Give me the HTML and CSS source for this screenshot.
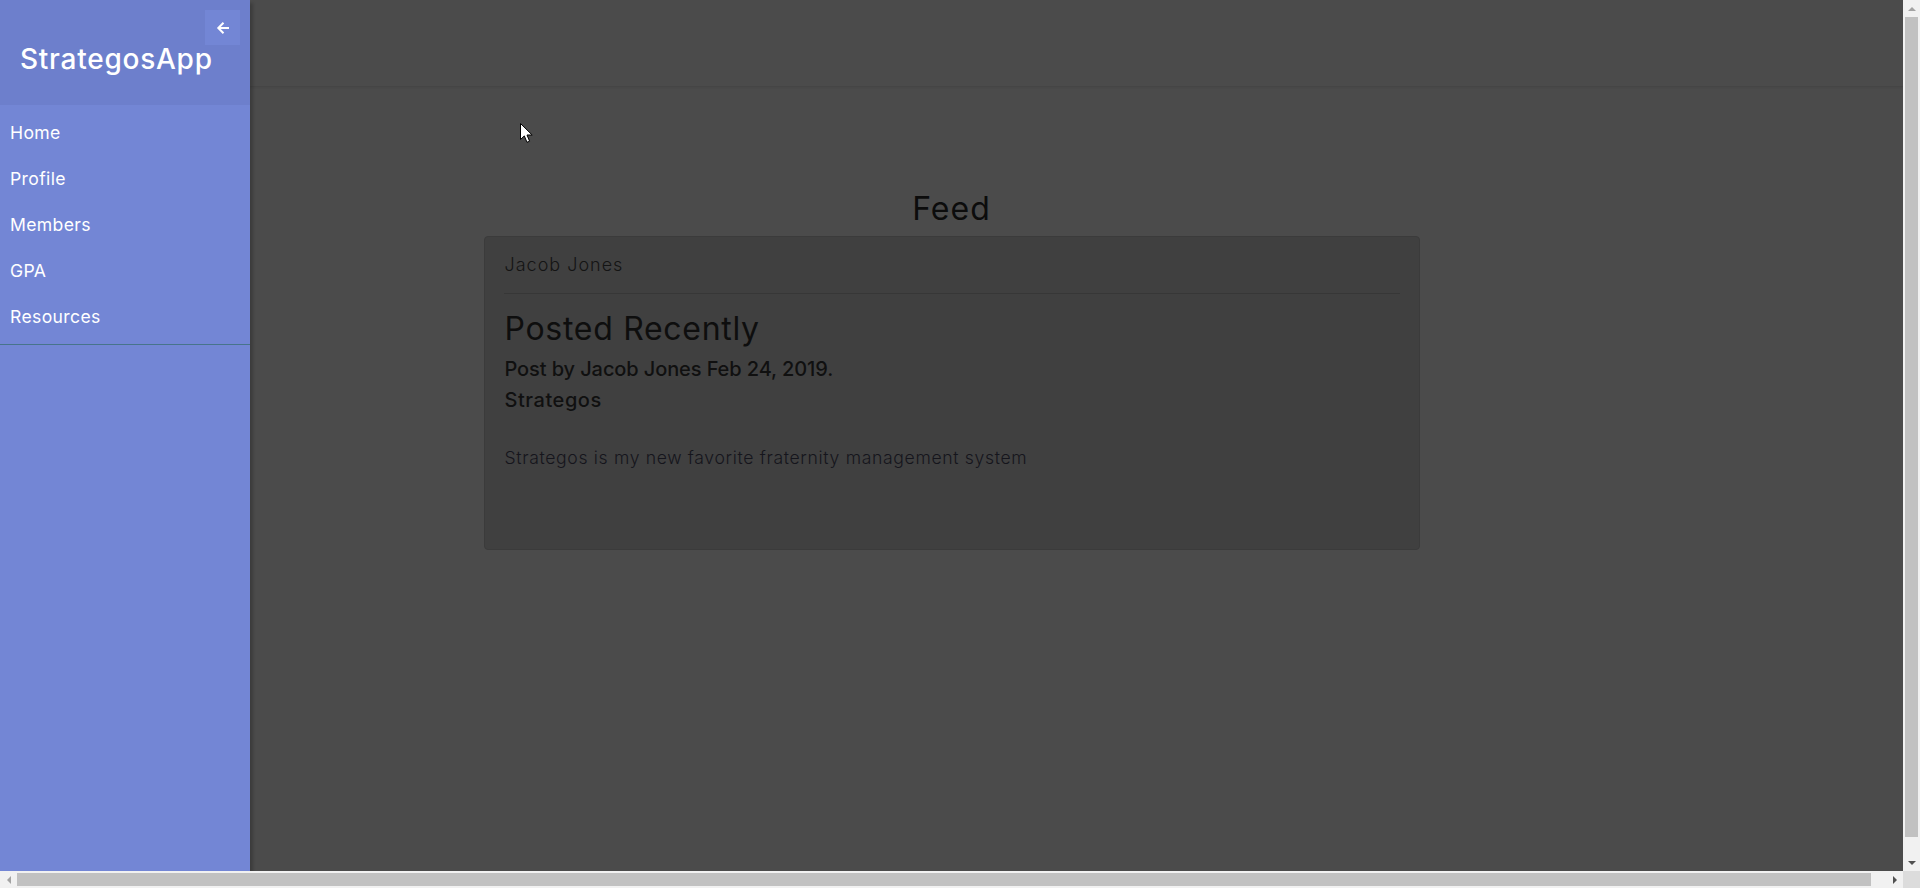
FILE: index.html
```html
<!DOCTYPE html>
<html lang="en">
<head>
<meta charset="utf-8">
<title>StrategosApp</title>
<link rel="stylesheet" href="styles.css">
</head>
<body>
<div class="viewport">
  <div class="content">
    <header class="topbar"></header>
    <main class="container">
      <h2 class="page-title">Feed</h2>
      <section class="card">
        <div class="card-header">Jacob Jones</div>
        <hr class="card-rule">
        <div class="card-body">
          <h2 class="post-title">Posted Recently</h2>
          <h5 class="post-meta">Post by Jacob Jones Feb 24, 2019.</h5>
          <h5 class="post-org">Strategos</h5>
          <p class="post-text">Strategos is my new favorite fraternity management system</p>
        </div>
      </section>
    </main>
  </div>

  <nav class="sidebar">
    <button class="dismiss" type="button" aria-label="Close">
      <svg width="14" height="14" viewBox="0 0 14 14" aria-hidden="true">
        <path d="M13 7H2.5" stroke="#fff" stroke-width="2" fill="none"/>
        <path d="M7.5 1.8L2.3 7l5.2 5.2" stroke="#fff" stroke-width="2" fill="none" stroke-linejoin="miter"/>
      </svg>
    </button>
    <div class="sidebar-header">
      <h3 class="brand">StrategosApp</h3>
    </div>
    <ul class="menu">
      <li><a href="#">Home</a></li>
      <li><a href="#">Profile</a></li>
      <li><a href="#">Members</a></li>
      <li><a href="#">GPA</a></li>
      <li><a href="#">Resources</a></li>
    </ul>
  </nav>

  <svg class="cursor" width="13" height="21" viewBox="0 0 13 21" aria-hidden="true">
    <path d="M0.5 0.5V16.5L4.3 12.9L7 19.3L9.6 18.2L7 12H12.2Z" fill="#fff" stroke="#000" stroke-width="1"/>
  </svg>
</div>

<div class="vscroll" aria-hidden="true">
  <div class="sb-btn">
    <svg width="8" height="4" viewBox="0 0 8 4"><path d="M4 0L8 4H0Z" fill="#a3a3a3"/></svg>
  </div>
  <div class="sb-track sb-track-v"><div class="sb-thumb sb-thumb-v"></div></div>
  <div class="sb-btn">
    <svg width="8" height="4" viewBox="0 0 8 4"><path d="M0 0H8L4 4Z" fill="#505050"/></svg>
  </div>
</div>
<div class="hscroll" aria-hidden="true">
  <div class="sb-btn">
    <svg width="4" height="8" viewBox="0 0 4 8"><path d="M4 0V8L0 4Z" fill="#a3a3a3"/></svg>
  </div>
  <div class="sb-track sb-track-h"><div class="sb-thumb sb-thumb-h"></div></div>
  <div class="sb-btn">
    <svg width="4" height="8" viewBox="0 0 4 8"><path d="M0 0L4 4L0 8Z" fill="#505050"/></svg>
  </div>
</div>
<div class="corner" aria-hidden="true"></div>
</body>
</html>
```
FILE: styles.css
```css
html,
body {
  height: 100%;
}

body {
  margin: 0;
  height: 100vh;
  overflow: hidden;
  display: grid;
  grid-template-columns: 1fr 17px;
  grid-template-rows: 1fr 17px;
  font-family: "Inter", "Noto Sans", sans-serif;
  background: #4b4b4b;
  color: #0d0d0d;
}

/* ---------- page viewport ---------- */
.viewport {
  position: relative;
  overflow: hidden;
  min-width: 0;
  min-height: 0;
}

.content {
  min-height: 100%;
  background: #4b4b4b;
}

.topbar {
  height: 86px;
  border-bottom: 1px solid #454545;
  box-shadow: 0 1px 2px rgba(0, 0, 0, 0.05);
  background: #4b4b4b;
}

.container {
  padding-top: 103px;
}

.page-title {
  margin: 0 0 8px;
  font-size: 32px;
  line-height: 38px;
  font-weight: 400;
  letter-spacing: 1px;
  text-align: center;
  color: #0c0c0c;
}

.card {
  width: 936px;
  margin: 0 auto;
  box-sizing: border-box;
  background: #404040;
  border: 1px solid #3b3b3b;
  border-radius: 4px;
  padding-bottom: 76px;
}

.card-header {
  padding: 15px 20px 0;
  font-size: 18px;
  line-height: 26px;
  font-weight: 300;
  letter-spacing: 1px;
  color: #141414;
  height: 41px;
}

.card-rule {
  margin: 0 19px;
  border: 0;
  border-top: 1px solid #373737;
  height: 0;
}

.card-body {
  padding: 16px 20px 0;
}

.post-title {
  margin: 0 0 9px;
  font-size: 32px;
  line-height: 38px;
  font-weight: 400;
  letter-spacing: 0.7px;
  color: #0e0e0e;
}

.post-meta,
.post-org {
  margin: 0 0 7px;
  font-size: 20px;
  line-height: 24px;
  font-weight: 500;
  letter-spacing: -0.1px;
  color: #101010;
}

.post-org {
  margin-bottom: 31px;
  letter-spacing: 0.55px;
}

.post-text {
  margin: 0;
  font-size: 17.6px;
  line-height: 29.92px;
  font-weight: 300;
  letter-spacing: 0.66px;
  color: #15151c;
}

/* ---------- sidebar drawer over the darkened page ---------- */
.sidebar {
  position: absolute;
  top: 0;
  left: 0;
  bottom: 0;
  width: 250px;
  background: #7386d5;
  color: #fff;
  box-shadow: 3px 3px 3px rgba(0, 0, 0, 0.2);
  z-index: 10;
}

.dismiss {
  position: absolute;
  top: 10px;
  right: 10px;
  width: 35px;
  height: 35px;
  padding: 0;
  border: 0;
  background: #7386d5;
  display: flex;
  align-items: center;
  justify-content: center;
}

.sidebar-header {
  box-sizing: border-box;
  height: 105px;
  padding: 42px 20px 0;
  background: #6d7fcc;
}

.brand {
  margin: 0;
  font-size: 28px;
  line-height: 34px;
  font-weight: 500;
  letter-spacing: 0.75px;
  color: #fff;
}

.menu {
  list-style: none;
  margin: 0;
  padding: 5px 0 4px;
  border-bottom: 1px solid #47748b;
}

.menu a {
  display: block;
  padding: 10px;
  font-size: 17.6px;
  line-height: 26px;
  letter-spacing: 0.35px;
  color: #fff;
  text-decoration: none;
}

.cursor {
  position: absolute;
  left: 520px;
  top: 123px;
  z-index: 20;
}

/* ---------- browser scrollbars ---------- */
.vscroll,
.hscroll {
  display: flex;
  background: #f1f1f1;
}

.vscroll {
  flex-direction: column;
}

.sb-btn {
  flex: 0 0 17px;
  width: 17px;
  height: 17px;
  display: flex;
  align-items: center;
  justify-content: center;
}

.sb-btn svg {
  display: block;
}

.sb-track {
  flex: 1;
  display: flex;
}

.sb-track-v {
  flex-direction: column;
  padding: 0 2px;
}

.sb-track-h {
  padding: 2px 0;
}

.sb-thumb {
  background: #c1c1c1;
}

.sb-thumb-v {
  height: 820px;
}

.sb-thumb-h {
  width: 1854px;
}

.corner {
  background: #dcdcdc;
}
```
